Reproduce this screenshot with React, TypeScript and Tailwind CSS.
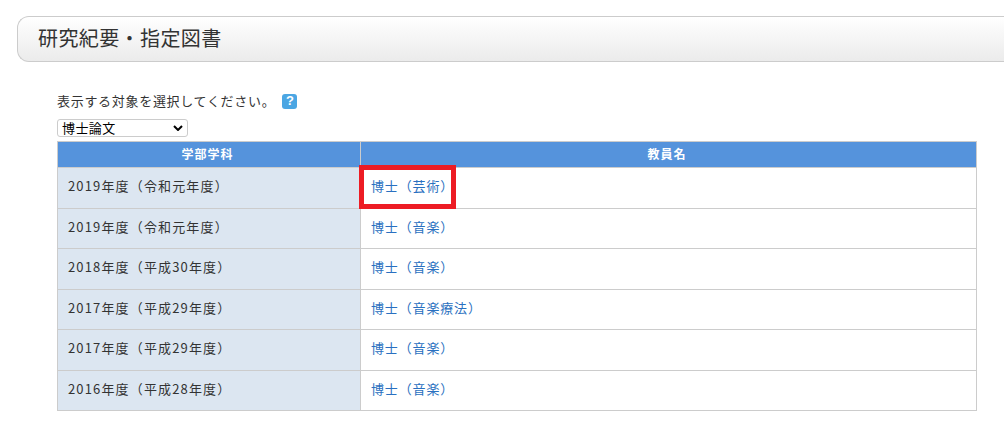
const rows = [
  ["2019年度（令和元年度）", "博士（芸術）"],
  ["2019年度（令和元年度）", "博士（音楽）"],
  ["2018年度（平成30年度）", "博士（音楽）"],
  ["2017年度（平成29年度）", "博士（音楽療法）"],
  ["2017年度（平成29年度）", "博士（音楽）"],
  ["2016年度（平成28年度）", "博士（音楽）"],
];

export default function App() {
  return (
    <div className="h-[429px] w-[1004px] overflow-hidden bg-white font-['Noto_Sans_CJK_JP',sans-serif] text-[#333]">
      <div className="ml-[17px] mt-[16px] flex h-[46px] w-[1010px] items-center rounded-l-[12px] border border-r-0 border-[#ccc] bg-gradient-to-b from-white to-[#ebebeb] pb-[2px] pl-[20px] text-[20px] tracking-[0.4px]">
        研究紀要・指定図書
      </div>
      <div className="ml-[57px] mt-[30px] w-[920px]">
        <p className="flex h-[18px] items-center text-[13px] tracking-[0.7px]">
          表示する対象を選択してください。
          <span className="ml-[7px] flex h-[15px] w-[15px] items-center justify-center rounded-[3px] bg-[#4ba6e3] font-['Liberation_Sans',sans-serif] text-[13px] font-bold tracking-normal text-white">
            ?
          </span>
        </p>
        <div className="mt-[9px] flex h-[18px] w-[131px] items-center justify-between rounded-[3px] border border-[#ccc] pb-[1px] pl-[4px] pr-[4px] text-[13px] leading-none tracking-[0.4px] text-black">
          博士論文
          <svg width="10" height="6" viewBox="0 0 10 6" fill="none" stroke="black" strokeWidth="2">
            <path d="M1 1l4 4 4-4" />
          </svg>
        </div>
        <div className="relative mt-[4px]">
          <table className="w-full table-fixed border-collapse text-[13px]">
            <thead>
              <tr className="h-[26px] bg-[#5593dc] font-bold text-white">
                <th className="w-[303px] border border-[#ccc] p-0 pb-[2px] pr-[3px] text-[12px] tracking-[1px]">学部学科</th>
                <th className="border border-[#ccc] p-0 pb-[2px] pr-[3px] text-[12px] tracking-[1px]">教員名</th>
              </tr>
            </thead>
            <tbody>
              {rows.map(([year, name], i) => (
                <tr key={i} className={i % 2 === 0 ? "h-[41px]" : "h-[40px]"}>
                  <td className={`border border-[#ccc] bg-[#dce6f1] p-0 pl-[10px] tracking-[1.15px] ${i % 2 === 0 ? "pb-[5px]" : "pb-[3px]"}`}>{year}</td>
                  <td className={`border border-[#ccc] p-0 pl-[10px] tracking-[0.85px] text-[#2a70c0] ${i % 2 === 0 ? "pb-[5px]" : "pb-[3px]"}`}>
                    <a href="#">{name}</a>
                  </td>
                </tr>
              ))}
            </tbody>
          </table>
          <div className="absolute left-[302px] top-[24px] h-[44px] w-[97px] border-[5px] border-[#ed1c24]" />
        </div>
      </div>
    </div>
  );
}
